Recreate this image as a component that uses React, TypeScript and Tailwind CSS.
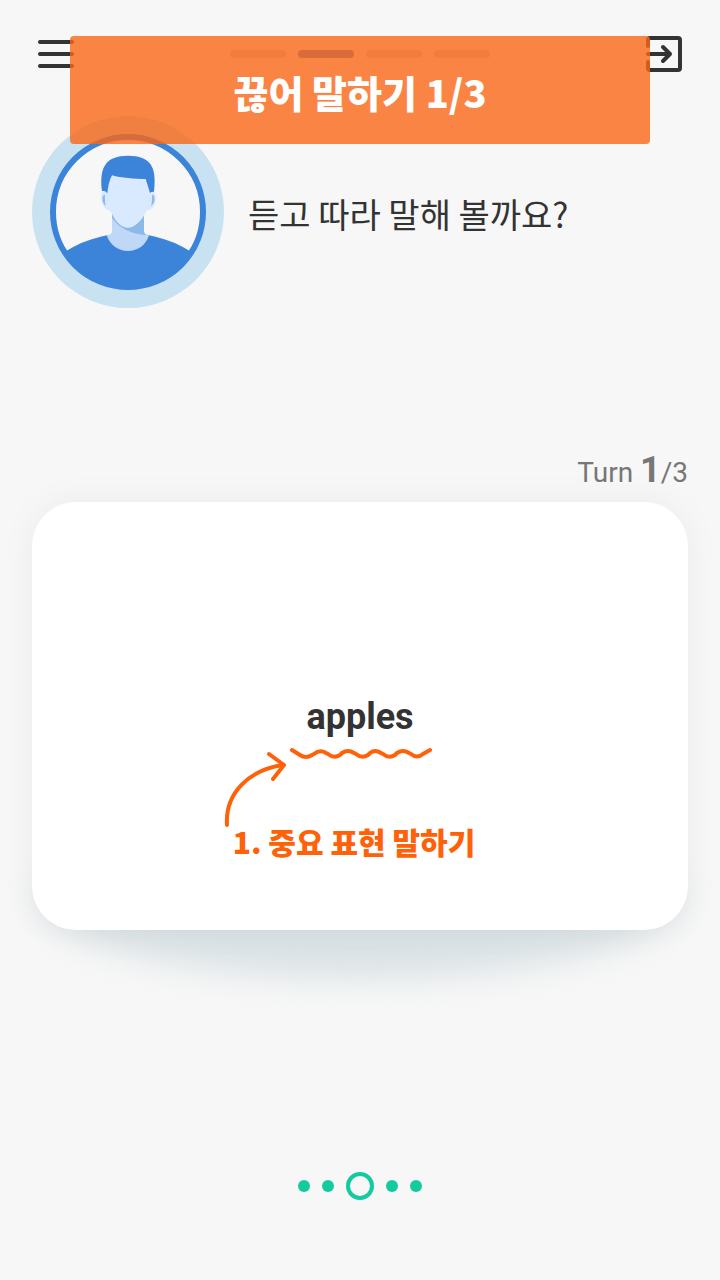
const KOREAN = "font-['Noto_Sans_CJK_KR',sans-serif]";

function Avatar() {
  return (
    <svg viewBox="0 0 192 192" className="size-48 shrink-0" role="img" aria-label="선생님">
      <defs>
        <clipPath id="portrait">
          <circle cx="96" cy="96" r="76" />
        </clipPath>
      </defs>
      <circle cx="96" cy="96" r="96" fill="#c9e2f1" />
      <circle cx="96" cy="96" r="75" fill="#f7f7f7" />
      <g clipPath="url(#portrait)">
        <path d="M12 192V150C24 140 32 136 36 134C47 127 60 122.500 75 119.300H117C132 122.500 145 127 156 134C160 136 168 140 180 150V192Z" fill="#3c84d9" />
        <path d="M80 96H112V115C112 118 114 118.500 117 119.300C114 129 106 135 96 135C86 135 78 129 74.700 119.300C78 118.500 80 118 80 115Z" fill="#c0d8f7" />
        <path d="M80 94V102C87 112 100 119 116 119C113 118.500 112 117.500 112 115V94Z" fill="#8db9e9" />
        <path d="M75 76C71 73 68 77 69.500 85C70.500 91 74 94 79 95ZM117.500 76C121 73 125 77 123.500 85C122.500 91 119 94 114 95Z" fill="#d9e9fe" />
        <path d="M71.500 79C74 76 72 85 74 90C70.500 88 69.500 82 71.500 79ZM121.500 79C119 76 121 85 119 90C122.500 88 123.500 82 121.500 79Z" fill="#8db9e9" />
        <path d="M78 57H116L119 78C119 84 117 91 114 96C109 106 102 111.700 96 111.700C90 111.700 84 107 79 96C75 90 73 84 74.500 78Z" fill="#d9e9fe" />
        <path d="M70 75C67 51 74 39.700 96 39.700C119 39.700 125 51 122 76C120.500 75.500 119 76 118 77L113.700 63C103 63 89 62 80 59.300C77 65 76 71 75.300 77.500C74 75 72 75 70 75Z" fill="#3c84d9" />
      </g>
      <circle cx="96" cy="96" r="75" fill="none" stroke="#3c84d9" strokeWidth="6" />
    </svg>
  );
}

function Header() {
  return (
    <header className="flex items-center justify-between px-[38px] pt-9">
      <button type="button" aria-label="메뉴" className="size-9">
        <svg viewBox="0 0 36 36" className="size-9" stroke="#333333" strokeWidth="4" strokeLinecap="round">
          <path d="M2 6H34M2 18H34M2 30H34" />
        </svg>
      </button>
      <div className="flex gap-3">
        <span className="h-2 w-14 rounded-full bg-[#cdd1d4]" />
        <span className="h-2 w-14 rounded-full bg-[#5485c0]" />
        <span className="h-2 w-14 rounded-full bg-[#cdd1d4]" />
        <span className="h-2 w-14 rounded-full bg-[#cdd1d4]" />
      </div>
      <button type="button" aria-label="나가기" className="size-9">
        <svg viewBox="0 0 36 36" className="size-9" fill="none" stroke="#333333" strokeWidth="4" strokeLinecap="round" strokeLinejoin="round">
          <path d="M2 10V4Q2 2 4 2H32Q34 2 34 4V32Q34 34 32 34H4Q2 34 2 32V26" />
          <path d="M2 18H24M17 11L24 18L17 25" />
        </svg>
      </button>
    </header>
  );
}

function Pager() {
  return (
    <div className="flex items-center justify-center gap-3">
      <span className="size-3 rounded-full bg-[#13cb9f]" />
      <span className="size-3 rounded-full bg-[#13cb9f]" />
      <span className="size-7 rounded-full border-4 border-[#13cb9f]" />
      <span className="size-3 rounded-full bg-[#13cb9f]" />
      <span className="size-3 rounded-full bg-[#13cb9f]" />
    </div>
  );
}

export default function App() {
  return (
    <div className="relative flex min-h-screen flex-col bg-[#f7f7f7] text-[#333333]">
      <Header />

      <section className="flex items-center gap-6 px-8 pt-11">
        <Avatar />
        <p className={`${KOREAN} pt-1 text-[34px] leading-12`}>듣고 따라 말해 볼까요?</p>
      </section>

      <main className="px-8 pt-[142px]">
        <p className="flex items-baseline justify-end font-[Roboto,sans-serif] text-[28px] leading-10 text-[#777777]">
          <span>Turn&nbsp;</span>
          <strong className="text-4xl leading-10 font-bold">1</strong>
          <span>/3</span>
        </p>
        <div className="relative mt-[9px]">
          <div className="absolute inset-x-2 -bottom-12 h-40 rounded-[50%] bg-[#dae2e5] blur-lg" />
          <div className="relative flex h-[428px] flex-col items-center rounded-[44px] bg-white pt-[191px] shadow-[0_0_36px_rgba(0,0,0,0.05)]">
            <p className="font-[Roboto,sans-serif] text-4xl leading-12 font-bold">apples</p>
            <svg viewBox="0 0 208 84" className="mt-1 mr-16 h-21 w-52 shrink-0" fill="none" stroke="#ff6108" strokeWidth="4" strokeLinecap="round" strokeLinejoin="round">
              <path d="M68 5L76 10Q82 14 88 10L90 9Q96 4 102 8L104 9Q110 14 116 10L118 8Q124 4 130 8L132 9Q138 14 144 10L146 8Q151 4 157 8L159 9Q165 14 171 10L173 8Q179 4 185 8L187 9Q193 14 199 9L206 5" />
              <path d="M3 80C1 48 25 25 59 20" />
              <path d="M45 9L60 20L49 34" />
            </svg>
            <p className={`${KOREAN} -mt-2 mr-3 text-[30px] leading-10 font-black text-[#ff6108]`}>1. 중요 표현 말하기</p>
          </div>
        </div>
      </main>

      <footer className="mt-auto pb-20">
        <Pager />
      </footer>

      <div className="absolute inset-x-[70px] top-9 flex h-27 items-center justify-center rounded bg-[#fa6716]/80 pt-1">
        <h1 className={`${KOREAN} text-[38px] leading-12 font-black text-white`}>끊어 말하기 1/3</h1>
      </div>
    </div>
  );
}
